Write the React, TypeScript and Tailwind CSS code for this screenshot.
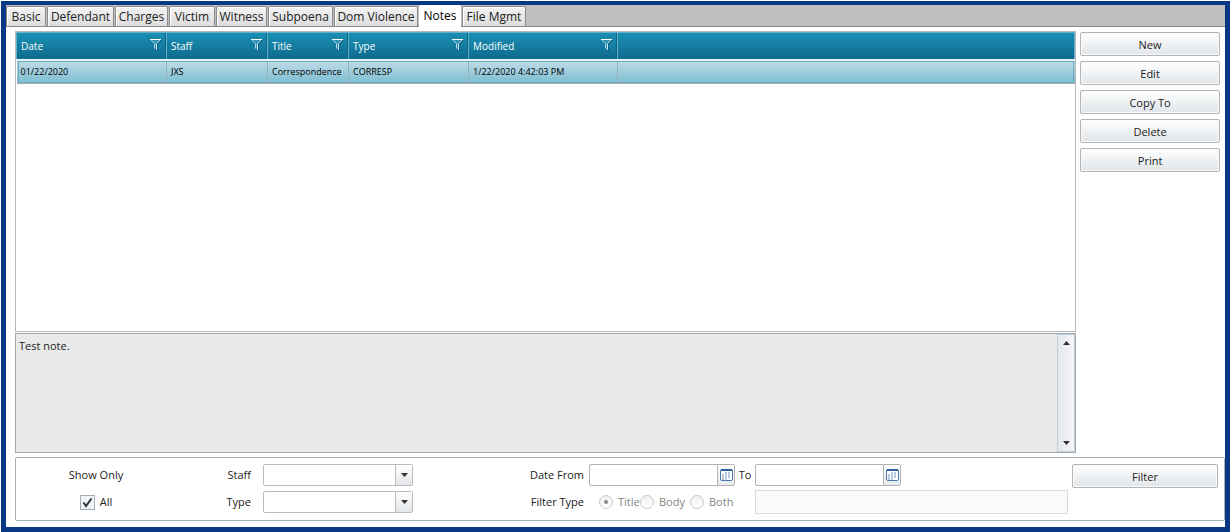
import { useState } from "react";

const TABS = [
    { name: "Basic", width: "w-[40px]" },
    { name: "Defendant", width: "w-[67px]" },
    { name: "Charges", width: "w-[53px]" },
    { name: "Victim", width: "w-[46px]" },
    { name: "Witness", width: "w-[51px]" },
    { name: "Subpoena", width: "w-[65px]" },
    { name: "Dom Violence", width: "w-[84px]" },
    { name: "Notes", width: "w-[42px]" },
    { name: "File Mgmt", width: "w-[64px]" },
];

const COLUMNS = [
    { name: "Date", width: "w-[150px]" },
    { name: "Staff", width: "w-[101px]" },
    { name: "Title", width: "w-[81px]" },
    { name: "Type", width: "w-[120px]" },
    { name: "Modified", width: "w-[149px]" },
];

const NOTE = ["01/22/2020", "JXS", "Correspondence", "CORRESP", "1/22/2020 4:42:03 PM"];

const ACTIONS = ["New", "Edit", "Copy To", "Delete", "Print"];

function FilterIcon() {
    return (
        <svg width="12" height="12" viewBox="0 0 12 12" aria-hidden="true">
            <path d="M1 1H12L8 5.5V12L5 10V5Z" fill="#0a4f6c" opacity="0.7" />
            <path d="M1 1H10L6.5 4.5V11L4.5 9.5V4.5Z" fill="#2f93b3" />
            <path d="M1 1.2L4.5 4.5V9.5" fill="none" stroke="#a9d3e2" />
            <path d="M10 1.2L6.5 4.5V11" fill="none" stroke="#cfe6ee" />
            <path d="M0 0.5H11" stroke="#ffffff" />
        </svg>
    );
}

function CalendarIcon() {
    return (
        <svg width="13" height="12" viewBox="0 0 13 12" className="shrink-0" aria-hidden="true">
            <rect x="0.5" y="0.5" width="12" height="11" rx="1.5" fill="#ffffff" stroke="#4a76ac" />
            <path d="M1 1H12" stroke="#2f5f9e" strokeWidth="2" />
            <path d="M5 4H11M2 6H11M2 8H11M2 10H8" stroke="#6f93c4" strokeDasharray="2 1" />
        </svg>
    );
}

function Arrow({ up = false }: { up?: boolean }) {
    return (
        <svg width="7" height="4" viewBox="0 0 7 4" aria-hidden="true">
            <path d={up ? "M0 4H7L3.5 0Z" : "M0 0H7L3.5 4Z"} fill="#333333" />
        </svg>
    );
}

function PushButton({ label }: { label: string }) {
    return (
        <button
            type="button"
            className="block h-6 w-full rounded-xs border border-[#b3b3b3] bg-linear-to-b from-white to-[#e0e5e9] pt-px text-center leading-[22px] shadow-[inset_0_0_0_1px_#fafafa]"
        >
            {label}
        </button>
    );
}

function Combo({ id }: { id: string }) {
    return (
        <div className="relative h-[22px] w-[150px]">
            <select
                id={id}
                className="h-full w-full appearance-none rounded-xs border border-[#bcbcbc] bg-white pr-5 pl-1"
            />
            <span className="pointer-events-none absolute inset-y-px right-px flex w-[17px] items-center justify-center border-l border-[#bcbcbc] bg-linear-to-b from-white to-[#e2e6ea]">
                <Arrow />
            </span>
        </div>
    );
}

function DateBox({ id }: { id: string }) {
    return (
        <div className="flex h-[22px] w-[146px] rounded-xs border border-[#b3b3b3] bg-white">
            <input id={id} type="text" className="min-w-0 grow px-1 outline-none" />
            <button
                type="button"
                aria-label="Open calendar"
                className="flex w-[17px] shrink-0 items-center justify-center border-l border-[#b3b3b3] bg-linear-to-b from-white to-[#e6eaee]"
            >
                <CalendarIcon />
            </button>
        </div>
    );
}

function Radio({ label, checked }: { label: string; checked?: boolean }) {
    return (
        <label className="flex items-center gap-[5px] text-[#838383]">
            <input
                type="radio"
                name="filterType"
                defaultChecked={checked}
                disabled
                className="grid size-[14px] shrink-0 appearance-none place-items-center rounded-full border border-[#c4cacf] bg-linear-to-b from-[#eef0f2] to-white before:size-1 before:rounded-full checked:before:bg-[#8c8c8c]"
            />
            {label}
        </label>
    );
}

export default function App() {
    const [active, setActive] = useState("Notes");

    return (
        <div className="min-h-screen bg-white pt-px pl-px font-['Open_Sans',sans-serif] text-[11px] leading-4 text-[#222222]">
            <div className="flex min-h-[531px] flex-col border-x-5 border-t-4 border-b-5 border-[#083884] bg-white">
                <div role="tablist" className="flex h-[22px] items-end border-b border-[#888888] bg-[#bfbfbf] text-[12px]">
                    {TABS.map((tab) => (
                        <button
                            key={tab.name}
                            type="button"
                            role="tab"
                            aria-selected={tab.name === active}
                            onClick={() => setActive(tab.name)}
                            className={`${tab.width} mr-px shrink-0 rounded-t-xs text-center whitespace-nowrap last:mr-0 ${
                                tab.name === active
                                    ? "-mb-px h-[22px] bg-white text-black"
                                    : "h-5 border border-b-0 border-[#8c8c8c] bg-linear-to-b from-[#f3f3f3] to-[#dddddd] shadow-[inset_1px_1px_0_#ffffff]"
                            }`}
                        >
                            {tab.name}
                        </button>
                    ))}
                </div>

                <div className="flex gap-1 pt-1 pr-[5px] pl-[9px]">
                    <div className="min-w-0 grow">
                        <div className="h-[301px] border border-[#b8b8b8] bg-white">
                            <table className="w-full table-fixed border-collapse text-left text-[10px]">
                                <thead>
                                    <tr className="h-[27px] border-b border-[#0d6a8a] bg-linear-to-b from-[#1b8fb4] to-[#0e6c8e] text-white">
                                        {COLUMNS.map((col) => (
                                            <th
                                                key={col.name}
                                                className={`${col.width} border border-[#62b0ca] p-0 pl-1 font-medium shadow-[inset_-1px_0_0_#0b6484]`}
                                            >
                                                <div className="flex items-center justify-between pt-px pr-1">
                                                    {col.name}
                                                    <button type="button" aria-label={`Filter ${col.name}`} className="-mt-0.5">
                                                        <FilterIcon />
                                                    </button>
                                                </div>
                                            </th>
                                        ))}
                                        <th className="border border-[#62b0ca]" />
                                    </tr>
                                </thead>
                                <tbody className="text-[9px]">
                                    <tr className="h-[24px] border-t-2 border-b border-t-[#e6f3f8] border-b-[#a9a9a9] bg-linear-to-b from-[#bddbe6] to-[#7bbdd2] text-black outline outline-[#6fa9c2] -outline-offset-2">
                                        {NOTE.map((value) => (
                                            <td key={value} className="border-r border-[#93b3bf] p-0 pl-1 whitespace-nowrap">
                                                {value}
                                            </td>
                                        ))}
                                        <td />
                                    </tr>
                                </tbody>
                            </table>
                        </div>

                        <div className="mt-px flex h-[120px] border border-[#9caab5] bg-[#eaeaea]">
                            <textarea
                                readOnly
                                aria-label="Note text"
                                defaultValue="Test note."
                                className="min-w-0 grow resize-none px-[3px] py-1 outline-none"
                            />
                            <div className="flex w-[18px] flex-col items-center justify-between border border-[#c5ccd3] bg-linear-to-r from-[#e3e7ee] to-[#f5f6f7] py-1.5">
                                <Arrow up />
                                <Arrow />
                            </div>
                        </div>
                    </div>

                    <div className="mt-px flex w-[140px] shrink-0 flex-col gap-[5px]">
                        {ACTIONS.map((action) => (
                            <PushButton key={action} label={action} />
                        ))}
                    </div>
                </div>

                <form className="mt-[4px] ml-[9px] flex h-[64px] rounded-xs border border-[#a4b0ba] pt-[6px] pr-[6px]">
                    <div className="grid w-[160px] grid-rows-[22px_22px] items-center justify-items-center gap-y-[5px]">
                        <span>Show Only</span>
                        <label className="flex items-center gap-[5px]">
                            <span className="relative size-[15px]">
                                <input
                                    type="checkbox"
                                    defaultChecked
                                    className="peer block size-[15px] appearance-none border border-[#a5adb5] bg-[#eef3f7]"
                                />
                                <svg
                                    viewBox="0 0 15 15"
                                    className="pointer-events-none absolute inset-0 hidden peer-checked:block"
                                    aria-hidden="true"
                                >
                                    <path d="M3.5 7.5L6 11L11.5 3.5" fill="none" stroke="#333333" strokeWidth="2" />
                                </svg>
                            </span>
                            All
                        </label>
                    </div>

                    <div className="grid w-[238px] grid-cols-[75px_150px] grid-rows-[22px_22px] items-center gap-x-3 gap-y-[5px]">
                        <label htmlFor="staff" className="text-right">Staff</label>
                        <Combo id="staff" />
                        <label htmlFor="type" className="text-right">Type</label>
                        <Combo id="type" />
                    </div>

                    <div className="ml-[95px] grid grid-cols-[80px_146px_20px_313px] grid-rows-[22px_22px] items-center gap-y-[5px]">
                        <label htmlFor="dateFrom" className="pr-[5px] text-right">Date From</label>
                        <DateBox id="dateFrom" />
                        <label htmlFor="dateTo" className="text-center">To</label>
                        <DateBox id="dateTo" />
                        <span className="pr-[5px] text-right">Filter Type</span>
                        <div className="col-span-2 grid grid-cols-[41px_50px_46px] pl-[10px]">
                            <Radio label="Title" checked />
                            <Radio label="Body" />
                            <Radio label="Both" />
                        </div>
                        <input
                            type="text"
                            aria-label="Filter text"
                            disabled
                            className="h-6 w-full border border-[#d9dcde] bg-[#fafafa] px-1"
                        />
                    </div>

                    <div className="ml-auto w-[146px] shrink-0">
                        <PushButton label="Filter" />
                    </div>
                </form>
            </div>
        </div>
    );
}
